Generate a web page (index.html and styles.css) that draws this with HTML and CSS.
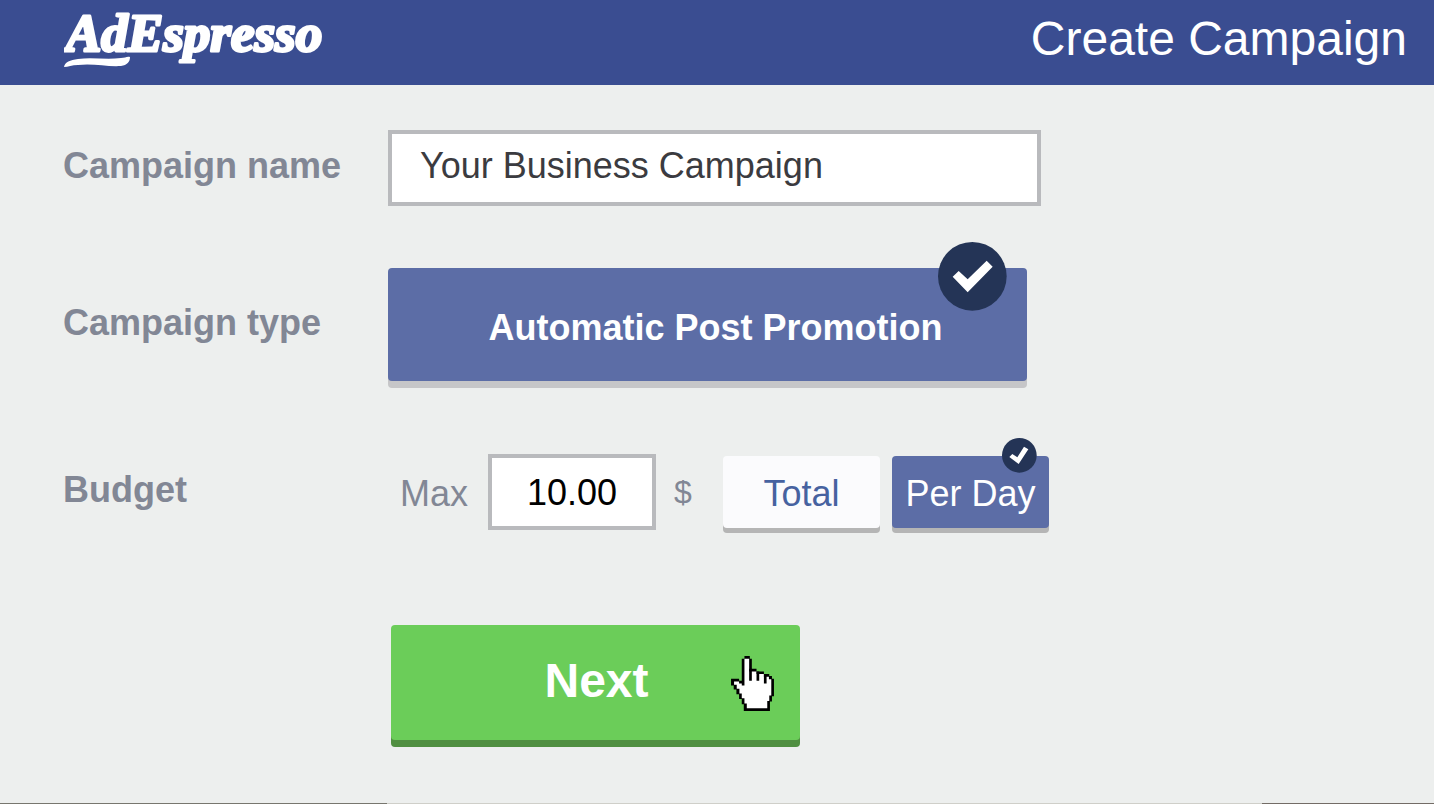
FILE: index.html
```
<!DOCTYPE html>
<html lang="en">
	<head>
		<meta charset="utf-8">
		<title>Create Campaign</title>
		<link rel="stylesheet" href="styles.css">
	</head>
	<body>
		<div class="header">
			<a href="#" class="logo" aria-label="AdEspresso">
				<svg width="272" height="85" viewBox="0 0 272 85">
					<text class="logo-text" x="2" y="51">AdEspresso</text>
					<path fill="#fff" d="M0 67 C1 62 6 60 14 59 C28 57 42 60 57 58 C61 58 63 56 66 57 C66 62 63 65 57 66 C43 67 29 63 14 65 C8 65 4 67 0 67Z"/>
				</svg>
			</a>
			<h1>Create Campaign</h1>
		</div>

		<form class="campaign">
			<div class="row">
				<label class="title" for="txtname">Campaign name</label>
				<input type="text" class="name" id="txtname" value="Your Business Campaign">
			</div>

			<div class="row type-row">
				<span class="title" id="typelabel">Campaign type</span>
				<button type="button" class="choice type selected" aria-describedby="typelabel" aria-pressed="true">
					Automatic Post Promotion
					<svg class="badge badge-big" viewBox="0 0 207 207">
						<circle cx="103" cy="103" r="103" fill="#243456"/>
						<polygon fill="#fff" points="44,104 62,87 89,112 146,56 164,74 89,151"/>
					</svg>
				</button>
			</div>

			<div class="row budget-row">
				<span class="title">Budget</span>
				<div class="budget">
					<label class="max" for="txtmax">Max</label>
					<input type="text" class="amount" id="txtmax" value="10.00">
					<span class="currency">$</span>
					<button type="button" class="choice period" aria-pressed="false">Total</button>
					<button type="button" class="choice period selected" aria-pressed="true">
						Per Day
						<svg class="badge badge-small" viewBox="0 0 105 105">
							<circle cx="52" cy="52" r="52" fill="#243456"/>
							<polygon fill="#fff" points="22,57 31,48 46,58 66,26 79,34 50,78"/>
						</svg>
					</button>
				</div>
			</div>

			<div class="row next-row">
				<button type="button" class="next">
					Next
					<svg class="pointer" viewBox="0 0 128 164">
						<polygon fill="#000" points="40,0 56,0 56,8 62,8 62,38 76,38 76,46 98,46 98,54 114,54 114,60 122,60 122,68 128,68 128,120 122,120 122,136 116,136 116,164 38,164 38,144 32,144 32,128 24,128 24,114 16,114 16,100 8,100 8,88 0,88 0,68 24,68 24,74 32,74 32,8 40,8"/>
						<polygon fill="#fff" points="40,8 54,8 54,46 76,46 76,54 98,54 98,62 113,62 113,69 120,69 120,118 114,118 114,134 108,134 108,156 47,156 47,142 40,142 40,126 32,126 32,112 25,112 25,98 17,98 17,86 9,86 9,76 24,76 24,82 32,82 32,88 40,88"/>
						<path fill="#000" d="M54 38h8v36h-8z M76 46h8v28h-8z M98 54h8v28h-8z"/>
					</svg>
				</button>
			</div>
		</form>

		<div class="bottom-line"></div>
	</body>
</html>
```
FILE: styles.css
```
*{
	margin: 0;
	padding: 0;
	box-sizing: border-box;
}

body{
	min-height: 100vh;
	display: flex;
	flex-direction: column;
	background: #edefee;
	font-family: "Liberation Sans", Arial, sans-serif;
	font-size: 36px;
}

input, button {
	font: inherit;
}

button {
	border: none;
	cursor: pointer;
}

.header{
	display: flex;
	justify-content: space-between;
	align-items: center;
	height: 85px;
	padding: 0 27px 0 64px;
	background: #3a4d91;
	color: white;
}

.header h1 {
	font-size: 48px;
	font-weight: normal;
	padding-bottom: 8px;
}

.logo {
	display: flex;
}

.logo-text {
	font-family: "Liberation Serif", serif;
	font-size: 53px;
	font-weight: bold;
	font-style: italic;
	fill: white;
	stroke: white;
	stroke-width: 3px;
	stroke-linejoin: round;
}

.campaign {
	flex: 1;
	padding: 45px 63px 40px;
}

.row {
	display: grid;
	grid-template-columns: 325px minmax(0, 661px);
	align-items: center;
}

.type-row {
	margin-top: 62px;
}

.budget-row {
	margin-top: 73px;
}

.next-row {
	margin-top: 95px;
}

.title {
	color: #828795;
	font-weight: bold;
	padding-bottom: 4px;
}

.name, .amount {
	height: 76px;
	border: 4px solid #b9babd;
	background: white;
}

.name {
	width: 100%;
	max-width: 653px;
	padding: 0 28px 4px;
	color: #3b3b40;
}

.choice {
	position: relative;
	border-radius: 4px;
	background: #fbfbfd;
	color: #4662a0;
	box-shadow: 0 5px 0 #b5b5b5;
}

.selected {
	background: #5c6da6;
	color: white;
}

.type {
	height: 113px;
	margin-right: 22px;
	padding: 6px 0 0 16px;
	font-weight: bold;
	box-shadow: 0 7px 0 #c6c6c8;
}

.badge {
	position: absolute;
}

.badge-big {
	width: 69px;
	height: 69px;
	top: -26px;
	right: 20px;
}

.badge-small {
	width: 35px;
	height: 35px;
	top: -18px;
	right: 12px;
}

.budget {
	display: flex;
	align-items: center;
	padding-left: 12px;
	color: #828795;
	white-space: nowrap;
}

.max {
	padding-top: 4px;
}

.amount {
	flex: none;
	width: 168px;
	padding-top: 2px;
	margin: 0 18px 0 20px;
	text-align: center;
	color: black;
}

.currency {
	flex: none;
	width: 49px;
	font-size: 32px;
}

.period {
	flex: none;
	width: 157px;
	height: 72px;
	padding-top: 4px;
}

.period + .period {
	margin-left: 12px;
}

.next {
	grid-column: 2;
	position: relative;
	width: 409px;
	max-width: 100%;
	height: 115px;
	margin-left: 3px;
	padding: 0 0 4px 2px;
	border-radius: 4px;
	background: #6bcd59;
	box-shadow: 0 7px 0 #508f41;
	color: white;
	font-size: 48px;
	font-weight: bold;
}

.pointer {
	position: absolute;
	width: 43px;
	height: 55px;
	top: 31px;
	right: 26px;
}

.bottom-line {
	height: 1px;
	background: linear-gradient(to right, #77766e 27%, #cfcfc9 27%, #cfcfc9 88%, #736c66 88%);
}
```
